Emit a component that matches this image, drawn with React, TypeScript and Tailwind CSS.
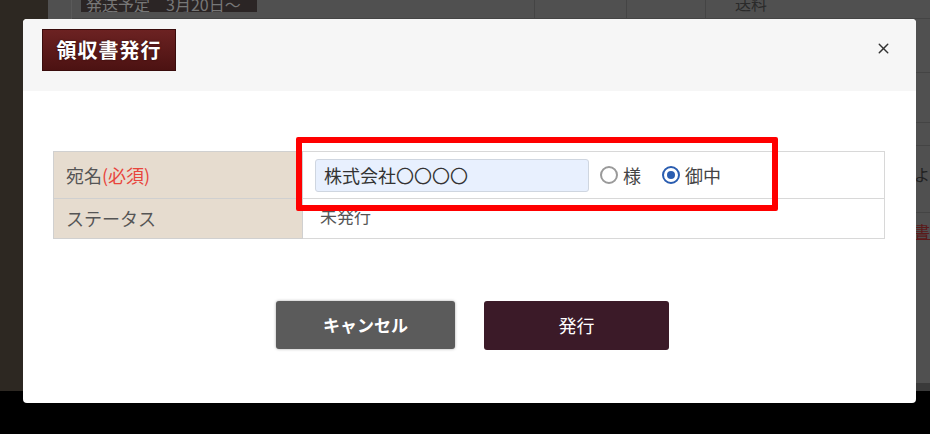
import { X } from "lucide-react";

const font = { fontFamily: '"Noto Sans CJK JP", "Noto Sans", sans-serif' };

function Radio({ checked, label }: { checked?: boolean; label: string }) {
  return (
    <label className="flex items-center gap-[5px] text-[18px] text-[#444]">
      <span
        className={`flex h-[18px] w-[18px] items-center justify-center rounded-full border-2 bg-white ${
          checked ? "border-[#2a5db0]" : "border-[#9a9a9a]"
        }`}
      >
        {checked && <span className="h-[8px] w-[8px] rounded-full bg-[#2a5db0]" />}
      </span>
      {label}
    </label>
  );
}

function ReceiptModal() {
  return (
    <div className="absolute left-[23px] top-[19px] flex h-[384px] w-[893px] flex-col overflow-hidden rounded-[4px] bg-white">
      <div className="flex h-[72px] items-start justify-between bg-[#f6f6f6] pl-[19px] pr-[24px] pt-[10px]">
        <h2 className="flex h-[42px] w-[134px] items-center justify-center border border-[#3a0c0c] bg-gradient-to-b from-[#6c2222] to-[#4c1212] text-[20px] font-bold tracking-[1px] text-white [text-shadow:0_0_2px_rgba(0,0,0,0.6)]">
          領収書発行
        </h2>
        <button className="mt-[11px] text-[#333]">
          <X size={17} strokeWidth={2} />
        </button>
      </div>

      <div className="px-[30px] pt-[60px]">
        <table className="w-[832px] border-collapse border border-[#d8d8d8] text-[18px]">
          <tbody>
            <tr className="h-[47px]">
              <th className="w-[249px] border border-[#d0d0d0] bg-[#e6dccf] pl-[12px] text-left font-normal text-[#555]">
                宛名<span className="text-[#e8453c]">(必須)</span>
              </th>
              <td className="border border-[#d8d8d8] pl-[12px]">
                <div className="flex items-center gap-[11px]">
                  <input
                    readOnly
                    value="株式会社〇〇〇〇"
                    className="h-[33px] w-[274px] rounded-[3px] border border-[#cfd6e0] bg-[#e8f0fe] px-[8px] text-[18px] text-[#333] outline-none"
                    style={font}
                  />
                  <div className="flex items-center gap-[21px]">
                    <Radio label="様" />
                    <Radio checked label="御中" />
                  </div>
                </div>
              </td>
            </tr>
            <tr className="h-[40px]">
              <th className="border border-[#d0d0d0] bg-[#e6dccf] pl-[12px] text-left font-normal text-[#555]">
                ステータス
              </th>
              <td className="border border-[#d8d8d8] pb-[6px] pl-[17px] text-[17px] text-[#555]">未発行</td>
            </tr>
          </tbody>
        </table>
      </div>

      <div className="mt-[62px] flex justify-center gap-[29px] pl-[6px]">
        <button className="h-[48px] w-[179px] rounded-[3px] bg-[#5b5b5b] text-[17px] font-bold text-white shadow-[0_0_3px_rgba(0,0,0,0.35)]">
          キャンセル
        </button>
        <button className="h-[49px] w-[185px] rounded-[3px] bg-[#3b1a28] text-[18px] text-white">
          発行
        </button>
      </div>

      <div className="pointer-events-none absolute left-[273px] top-[118px] h-[74px] w-[482px] rounded-[2px] border-[6px] border-[#ff0000]" />
    </div>
  );
}

export default function App() {
  return (
    <div className="relative h-[434px] w-[930px] overflow-hidden bg-black" style={font}>
      <div className="flex h-[391px]">
        <div className="w-[48px] bg-[#2d2822]" />
        <div className="flex flex-1 bg-[#505050]">
          <div className="w-[24px] border-r border-[#5a5a5a]" />
          <div className="flex flex-1 flex-col">
            <div className="flex h-[19px] border-b border-[#444]">
              <div className="ml-[9px] flex h-[12px] w-[176px] items-end overflow-hidden bg-[#2b2525] pl-[5px] text-[16px] leading-[16px] text-[#777]">
                発送予定　3月20日〜
              </div>
              <div className="ml-[277px] flex flex-1">
                <div className="w-[92px] border-l border-[#444]" />
                <div className="w-[79px] border-l border-[#444]" />
                <div className="flex-1 overflow-hidden border-l border-[#444] pl-[29px] text-[16px] leading-[6px] text-[#2a2a2a]">
                  送料
                </div>
              </div>
            </div>
            <div className="ml-auto flex w-[60px] flex-col text-[16px]">
              <div className="h-[54px] border-b border-[#444]" />
              <div className="h-[50px] border-b border-[#444]" />
              <div className="h-[23px] border-b border-[#444]" />
              <div className="h-[67px] border-b border-[#444] pl-[44px] pt-[16px] text-[#222]">よ</div>
              <div className="h-[40px] pl-[44px] pt-[6px] text-[#5a1a1a] underline">書</div>
            </div>
            <div className="ml-auto mt-auto h-[8px] w-[60px] bg-[#3a3a3a]" />
          </div>
        </div>
      </div>
      <ReceiptModal />
    </div>
  );
}
